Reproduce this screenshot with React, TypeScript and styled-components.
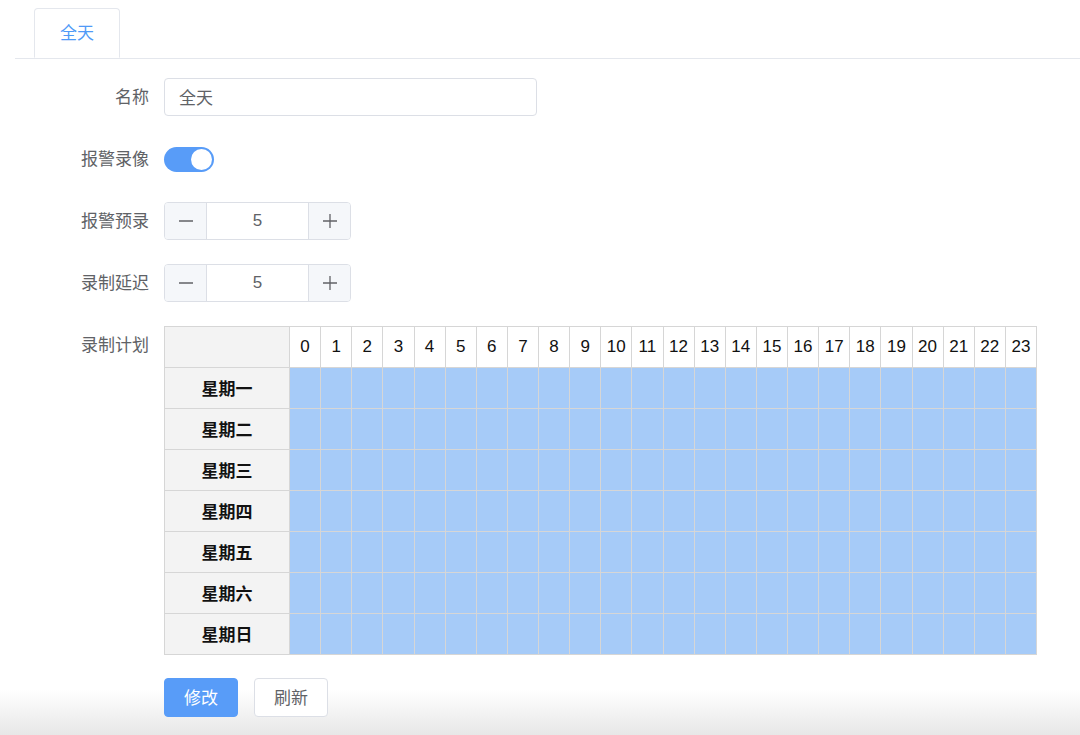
import styled, { createGlobalStyle } from "styled-components";

const GlobalStyle = createGlobalStyle`
  html, body {
    margin: 0;
    padding: 0;
  }
  body {
    font-family: "Noto Sans CJK SC", "Liberation Sans", sans-serif;
    color: #606266;
  }
`;

const Page = styled.div`
  width: 1080px;
  height: 735px;
  overflow: hidden;
  background: linear-gradient(to bottom, #fff 0, #fff 690px, #e7e7e7 735px);
`;

const TabBar = styled.div`
  display: flex;
  margin-left: 15px;
  padding: 8px 0 0 19px;
  border-bottom: 1px solid #e4e7ed;
  height: 50px;
`;

const Tab = styled.div`
  width: 86px;
  height: 50px;
  box-sizing: border-box;
  border: 1px solid #e4e7ed;
  border-bottom: 1px solid #fff;
  border-radius: 4px 4px 0 0;
  display: flex;
  align-items: center;
  justify-content: center;
  padding-bottom: 3px;
  font-size: 17px;
  color: #4f9af7;
  margin-bottom: -1px;
  background: #fff;
`;

const Form = styled.div`
  padding-top: 19px;
  display: flex;
  flex-direction: column;
  gap: 24px;
`;

const Row = styled.div`
  display: flex;
  align-items: flex-start;
`;

const Label = styled.div`
  width: 149px;
  flex-shrink: 0;
  text-align: right;
  padding-right: 15px;
  line-height: 36px;
  font-size: 17px;
  color: #606266;
`;

const Control = styled.div`
  min-height: 38px;
  display: flex;
  align-items: center;
`;

const TextInput = styled.div`
  width: 373px;
  height: 38px;
  box-sizing: border-box;
  border: 1px solid #dcdfe6;
  border-radius: 4px;
  padding: 0 0 2px 14px;
  display: flex;
  align-items: center;
  font-size: 17px;
  color: #606266;
`;

const Switch = styled.div<{ on: boolean }>`
  width: 50px;
  height: 25px;
  border-radius: 13px;
  background: ${(p) => (p.on ? "#589cf8" : "#dcdfe6")};
  display: flex;
  align-items: center;
  justify-content: ${(p) => (p.on ? "flex-end" : "flex-start")};
  padding: 0 2px;
  box-sizing: border-box;
`;

const Knob = styled.div`
  width: 21px;
  height: 21px;
  border-radius: 50%;
  background: #fff;
`;

const Stepper = styled.div`
  width: 187px;
  height: 38px;
  box-sizing: border-box;
  border: 1px solid #dcdfe6;
  border-radius: 4px;
  display: flex;
  overflow: hidden;
`;

const StepBtn = styled.div<{ side: "left" | "right" }>`
  width: 41px;
  background: #f5f7fa;
  display: flex;
  align-items: center;
  justify-content: center;
  ${(p) =>
    p.side === "left"
      ? "border-right: 1px solid #dcdfe6;"
      : "border-left: 1px solid #dcdfe6;"}
`;

const StepValue = styled.div`
  flex: 1;
  display: flex;
  align-items: center;
  justify-content: center;
  font-family: "Liberation Sans", sans-serif;
  font-size: 17px;
  color: #606266;
`;

const Schedule = styled.div`
  width: 873px;
  box-sizing: border-box;
  display: grid;
  grid-template-columns: 124px repeat(24, 1fr);
  grid-auto-rows: 40px;
  gap: 1px;
  padding: 1px;
  background: #d6d6d6;
`;

const Corner = styled.div`
  background: #f3f3f3;
`;

const HourCell = styled.div`
  background: #fff;
  display: flex;
  align-items: center;
  justify-content: center;
  font-family: "Liberation Sans", sans-serif;
  font-size: 17px;
  color: #111;
`;

const DayCell = styled.div`
  background: #f3f3f3;
  display: flex;
  align-items: center;
  justify-content: center;
  padding-bottom: 2px;
  font-size: 17px;
  font-weight: 700;
  color: #111;
`;

const Slot = styled.div<{ active: boolean }>`
  background: ${(p) => (p.active ? "#a6cbf8" : "#fff")};
`;

const Actions = styled.div`
  display: flex;
  gap: 16px;
  padding-left: 164px;
  margin-top: -1px;
`;

const Button = styled.div<{ primary?: boolean }>`
  width: 74px;
  height: 39px;
  box-sizing: border-box;
  border-radius: 4px;
  border: 1px solid ${(p) => (p.primary ? "#589cf8" : "#dcdfe6")};
  background: ${(p) => (p.primary ? "#589cf8" : "#fff")};
  color: ${(p) => (p.primary ? "#fff" : "#606266")};
  display: flex;
  align-items: center;
  justify-content: center;
  padding-bottom: 2px;
  font-size: 17px;
`;

const MinusIcon = () => (
  <svg width="16" height="16" viewBox="0 0 16 16">
    <line x1="1" y1="8" x2="15" y2="8" stroke="#606266" strokeWidth="1.3" />
  </svg>
);

const PlusIcon = () => (
  <svg width="16" height="16" viewBox="0 0 16 16">
    <line x1="1" y1="8" x2="15" y2="8" stroke="#606266" strokeWidth="1.3" />
    <line x1="8" y1="1" x2="8" y2="15" stroke="#606266" strokeWidth="1.3" />
  </svg>
);

const days = ["星期一", "星期二", "星期三", "星期四", "星期五", "星期六", "星期日"];
const hours = Array.from({ length: 24 }, (_, i) => i);

function NumberStepper({ value }: { value: number }) {
  return (
    <Stepper>
      <StepBtn side="left">
        <MinusIcon />
      </StepBtn>
      <StepValue>{value}</StepValue>
      <StepBtn side="right">
        <PlusIcon />
      </StepBtn>
    </Stepper>
  );
}

function App() {
  return (
    <Page>
      <GlobalStyle />
      <TabBar>
        <Tab>全天</Tab>
      </TabBar>
      <Form>
        <Row>
          <Label>名称</Label>
          <Control>
            <TextInput>全天</TextInput>
          </Control>
        </Row>
        <Row>
          <Label>报警录像</Label>
          <Control>
            <Switch on={true}>
              <Knob />
            </Switch>
          </Control>
        </Row>
        <Row>
          <Label>报警预录</Label>
          <Control>
            <NumberStepper value={5} />
          </Control>
        </Row>
        <Row>
          <Label>录制延迟</Label>
          <Control>
            <NumberStepper value={5} />
          </Control>
        </Row>
        <Row>
          <Label>录制计划</Label>
          <Schedule>
            <Corner />
            {hours.map((h) => (
              <HourCell key={h}>{h}</HourCell>
            ))}
            {days.map((d) => [
              <DayCell key={d}>{d}</DayCell>,
              ...hours.map((h) => <Slot key={d + h} active={true} />),
            ])}
          </Schedule>
        </Row>
        <Actions>
          <Button primary>修改</Button>
          <Button>刷新</Button>
        </Actions>
      </Form>
    </Page>
  );
}

export default App;
